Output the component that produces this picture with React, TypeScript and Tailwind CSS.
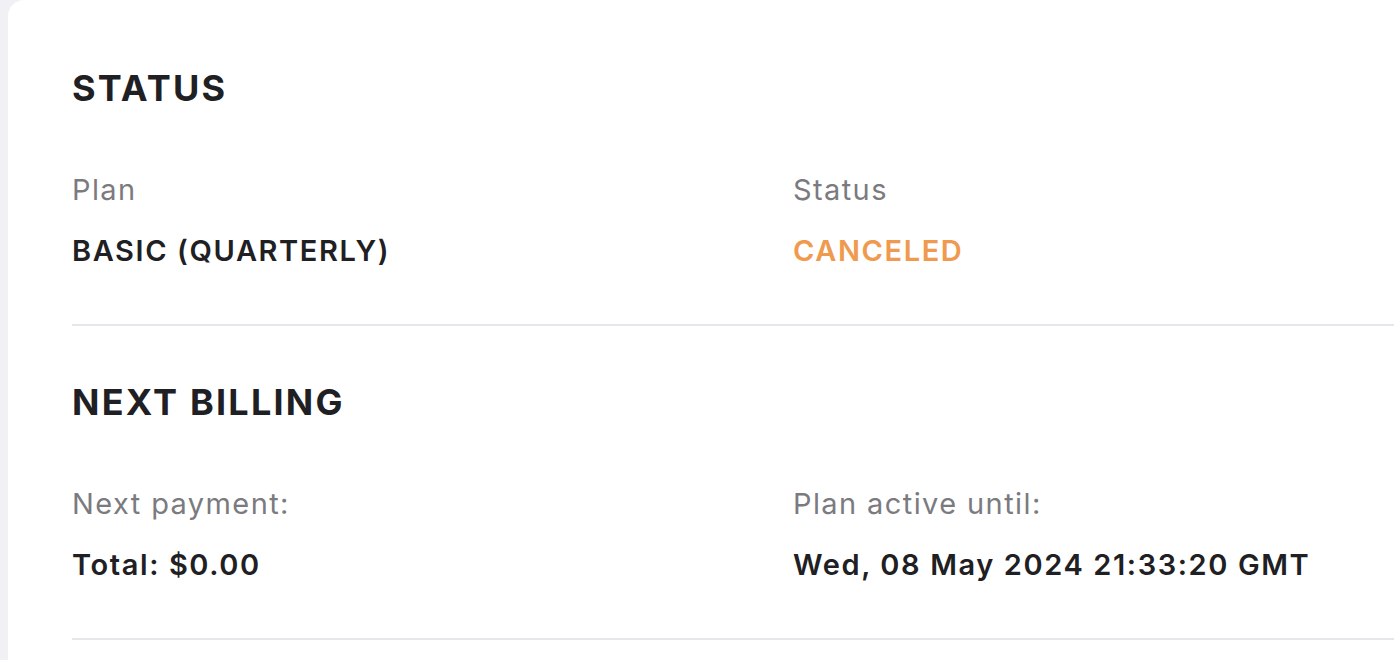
import React from "react";

function Field({ label, value, valueClass }: { label: string; value: string; valueClass?: string }) {
  return (
    <div className="flex flex-col gap-[25px]">
      <div className="text-[29px] leading-[36px] tracking-[1.4px] text-[#7b7b7f]">{label}</div>
      <div className={"text-[29px] leading-[36px] tracking-[1.6px] font-semibold " + (valueClass ?? "text-[#1f2023]")}>{value}</div>
    </div>
  );
}

function Section({ title, children, first }: { title: string; children: React.ReactNode; first?: boolean }) {
  return (
    <section className={"border-b-2 border-[#e6e6eb] pb-[55px] " + (first ? "pt-[68px]" : "pt-[56px]")}>
      <h2 className="text-[36px] leading-[40px] font-bold text-[#1f2023] tracking-[2.2px]">{title}</h2>
      <div className="mt-[64px] grid grid-cols-[721px_1fr]">{children}</div>
    </section>
  );
}

export default function App() {
  return (
    <div className="h-[660px] overflow-hidden bg-[#f1f1f5] pl-2" style={{ fontFamily: "Inter, 'Noto Sans', sans-serif" }}>
      <div className="h-full bg-white rounded-tl-2xl pl-16 w-[1500px]">
        <Section title="STATUS" first>
          <Field label="Plan" value="BASIC (QUARTERLY)" />
          <Field label="Status" value="CANCELED" valueClass="text-[#ef9a4e]" />
        </Section>
        <Section title="NEXT BILLING">
          <Field label="Next payment:" value="Total: $0.00" />
          <Field label="Plan active until:" value="Wed, 08 May 2024 21:33:20 GMT" />
        </Section>
      </div>
    </div>
  );
}
